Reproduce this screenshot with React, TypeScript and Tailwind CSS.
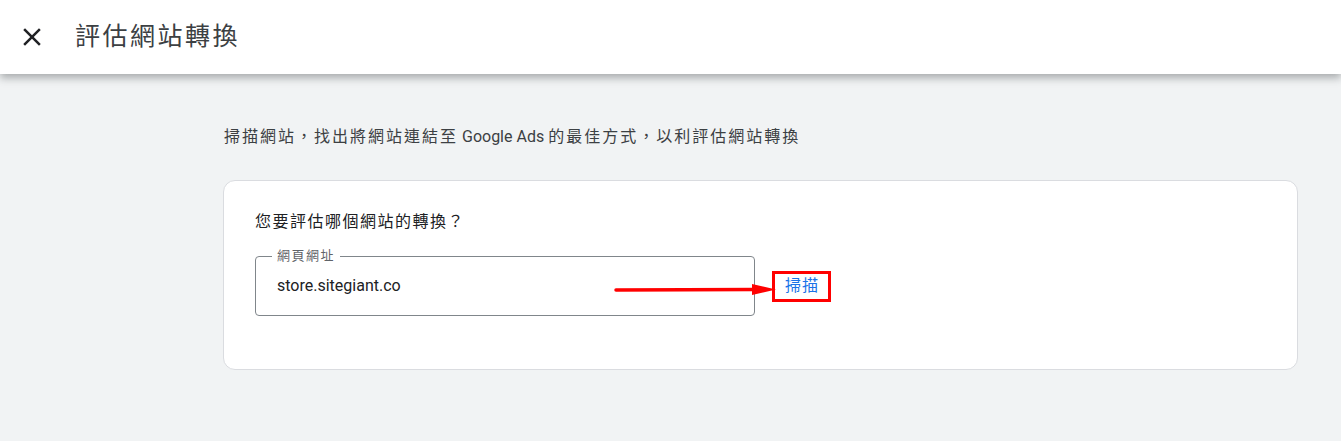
import React from 'react';

const font = { fontFamily: 'Roboto, "Noto Sans CJK TC", sans-serif' };

const App: React.FC = () => {
  return (
    <div className="min-h-screen w-full bg-[#f1f3f4]" style={font}>
      {/* Header */}
      <header className="relative z-10 flex h-[74px] items-center bg-white shadow-[0_4px_8px_rgba(60,64,67,0.4)]">
        <button className="ml-[16px] flex h-8 w-8 items-center justify-center text-[#202124]">
          <svg width="30" height="30" viewBox="0 0 24 24" fill="currentColor">
            <path d="M19 6.41 17.59 5 12 10.59 6.41 5 5 6.41 10.59 12 5 17.59 6.41 19 12 13.41 17.59 19 19 17.59 13.41 12z" />
          </svg>
        </button>
        <h1 className="ml-[27px] text-[25px] leading-[32px] tracking-[2.5px] text-[#3c4043]">評估網站轉換</h1>
      </header>

      <main className="pl-[223px] pr-[43px] pt-[51px]">
        <p className="pl-px text-[16px] leading-[24px] tracking-[2px] text-[#3c4043]">
          掃描網站，找出將網站連結至<span className="tracking-normal"> Google Ads </span>的最佳方式，以利評估網站轉換
        </p>

        <div className="mt-[31px] rounded-[12px] border border-[#dadce0] bg-white pl-[31px] pt-[29px] pb-[53px]">
          <p className="text-[16px] leading-[24px] tracking-[1.5px] text-[#202124]">您要評估哪個網站的轉換？</p>

          <div className="relative mt-[22px] flex items-center">
            <div className="relative h-[60px] w-[500px] rounded-[4px] border border-[#80868b]">
              <span className="absolute -top-[10px] left-[16px] bg-white px-[5px] text-[13px] leading-[18px] tracking-[1.5px] text-[#5f6368]">
                網頁網址
              </span>
              <div className="flex h-full items-center pl-[21px] text-[16px] text-[#202124]">store.sitegiant.co</div>
            </div>

            <button className="ml-[17px] flex h-[31px] w-[59px] items-center justify-center border-[3px] border-[#ff0000] pl-px text-[16px] tracking-[1px] text-[#1a73e8]">
              掃描
            </button>

            {/* annotation arrow */}
            <svg className="pointer-events-none absolute left-[359px] top-[26px]" width="164" height="16" viewBox="0 0 164 16">
              <path d="M2 8 L140 7.5" stroke="#ff0000" strokeWidth="3.5" strokeLinecap="round" />
              <path d="M138 2 L162 7.5 L138 13 Z" fill="#ff0000" />
            </svg>
          </div>
        </div>
      </main>
    </div>
  );
};

export default App;
